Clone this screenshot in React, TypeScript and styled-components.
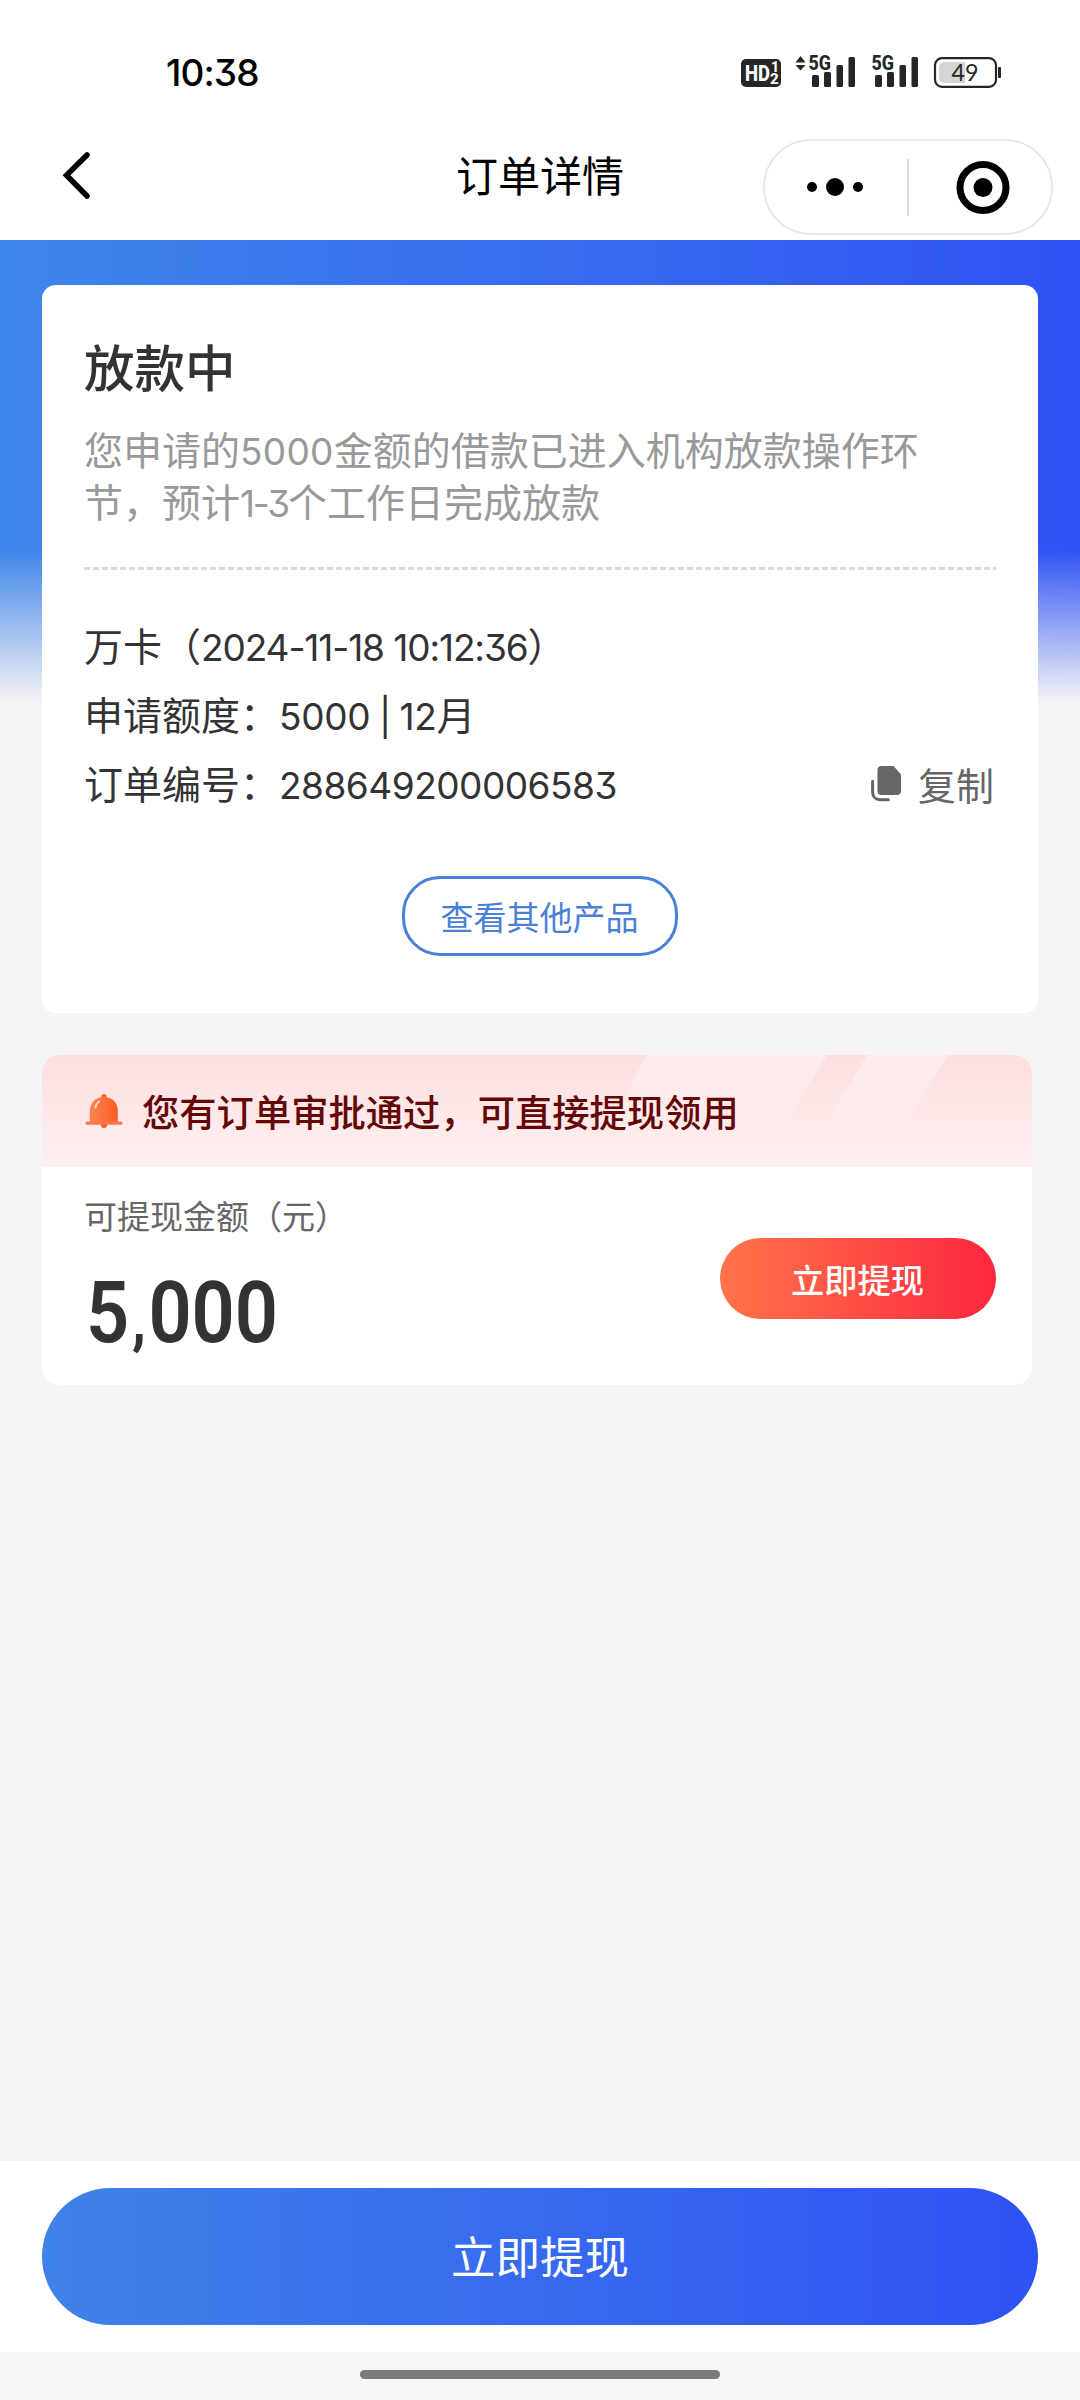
import React from "react";
import styled, { createGlobalStyle } from "styled-components";

const cjk = `"Noto Sans CJK SC", "Noto Sans", sans-serif`;

const GlobalStyle = createGlobalStyle`
  *, *::before, *::after { box-sizing: border-box; }
  body { margin: 0; background: #f5f5f5; }
  h1, h2, p { margin: 0; font-weight: 400; }
  button { border: 0; padding: 0; font-family: inherit; background: none; cursor: pointer; }
  svg { display: block; }
`;

const Screen = styled.div`
  width: 1080px;
  height: 2400px;
  display: flex;
  flex-direction: column;
  background: #f5f5f5;
  color: #333;
  font-family: ${cjk};
`;

const StatusBar = styled.div`
  height: 130px;
  padding: 16px 77px 0 166px;
  display: flex;
  align-items: center;
  justify-content: space-between;
  background: #fff;
`;

const Clock = styled.span`
  font: 500 37px/40px Inter, sans-serif;
  font-feature-settings: "cv09";
  letter-spacing: -0.9px;
  color: #000;
`;

const NavBar = styled.header`
  height: 110px;
  padding: 0 27px 0 54px;
  display: grid;
  grid-template-columns: 1fr auto 1fr;
  background: #fff;
`;

const BackButton = styled.button`
  width: 44px;
  height: 90px;
`;

const NavTitle = styled.h1`
  font-size: 42px;
  line-height: 60px;
  padding-top: 14px;
  margin-left: -27px;
  color: #000;
`;

const Capsule = styled.div`
  justify-self: end;
  width: 290px;
  height: 96px;
  margin-top: 9px;
  border: 2px solid #e8e8e8;
  border-radius: 48px;
  display: flex;
  align-items: center;
`;

const CapsuleHalf = styled.div<{ $shift: number }>`
  flex: 0 0 142px;
  display: flex;
  justify-content: center;
  padding-left: ${(p) => Math.max(p.$shift, 0)}px;
  padding-right: ${(p) => Math.max(-p.$shift, 0)}px;
`;

const CapsuleRule = styled.div`
  width: 2px;
  height: 57px;
  background: #dedede;
`;

const Main = styled.main`
  flex: 1;
  padding: 45px 42px 0;
  display: flex;
  flex-direction: column;
  gap: 42px;
  background:
    linear-gradient(to bottom, rgba(245, 245, 245, 0) 310px, #f5f5f5 462px),
    linear-gradient(to right, #3f86ea, #2f52f4);
`;

const OrderCard = styled.section`
  height: 728px;
  padding: 50px 42px 57px;
  border-radius: 14px;
  background: #fff;
  display: flex;
  flex-direction: column;
`;

const OrderStatus = styled.h2`
  font-size: 50.5px;
  line-height: 60px;
  font-weight: 500;
`;

const StatusNote = styled.p`
  margin-top: 27px;
  font-size: 39px;
  line-height: 52px;
  color: #999;
  white-space: nowrap;
`;

const Digits = styled.span<{ $gap?: number; $word?: number }>`
  font-family: Inter, ${cjk};
  font-size: 37px;
  line-height: 1;
  font-weight: 400;
  font-feature-settings: "cv09";
  letter-spacing: ${(p) => p.$gap ?? 0}px;
  word-spacing: ${(p) => p.$word ?? 0}px;
`;

const DashedRule = styled.div`
  height: 3px;
  flex: none;
  margin-top: 41px;
  background: repeating-linear-gradient(to right, #dcdcdc 0 6px, transparent 6px 9px);
`;

const OrderRows = styled.div`
  margin-top: 40px;
`;

const OrderRow = styled.div`
  height: 69px;
  display: flex;
  align-items: center;
  justify-content: space-between;
  font-size: 39px;
  line-height: 69px;
  white-space: nowrap;
`;

const CopyButton = styled.button`
  display: flex;
  align-items: center;
  gap: 17px;
  margin-right: 2px;
  padding-top: 3px;
  font-size: 38px;
  line-height: 66px;
  color: #666;
`;

const OutlineButton = styled.button`
  width: 276px;
  height: 80px;
  margin-top: auto;
  align-self: center;
  border: 3px solid #4a80d6;
  border-radius: 38px;
  font-size: 33px;
  line-height: 72px;
  text-indent: -1px;
  color: #4a80d6;
`;

const OfferCard = styled.section`
  width: 990px;
  height: 330px;
  border-radius: 18px;
  overflow: hidden;
  background: #fff;
`;

const OfferHeader = styled.div`
  position: relative;
  height: 112px;
  padding-left: 43px;
  display: flex;
  align-items: center;
  gap: 19px;
  background: linear-gradient(to bottom, #fddfe0, #feecec 75%, #feefef);
`;

const HeaderPattern = styled.svg`
  position: absolute;
  inset: 0;
`;

const BellDrawing = styled.svg`
  position: relative;
`;

const OfferTitle = styled.h2`
  position: relative;
  font-size: 37.3px;
  line-height: 60px;
  font-weight: 500;
  color: #650707;
`;

const OfferBody = styled.div`
  height: 218px;
  padding: 0 36px 0 42px;
  display: flex;
  justify-content: space-between;
`;

const AmountLabel = styled.p`
  margin-top: 28px;
  font-size: 33px;
  line-height: 40px;
  color: #666;
`;

const Amount = styled.p`
  margin: 28px 0 0 2px;
  font: 600 86px/100px Roboto, sans-serif;
  color: #333;
  transform: scaleX(0.88);
  transform-origin: left;
`;

const Comma = styled.span`
  font-size: 64px;
  line-height: 1;
  margin: 0 3px;
  font-weight: 700;
`;

const WithdrawButton = styled.button`
  width: 276px;
  height: 81px;
  margin-top: 71px;
  padding-right: 1px;
  border-radius: 41px;
  font-size: 33.3px;
  line-height: 77px;
  font-weight: 500;
  color: #fff;
  background: linear-gradient(to right, #ff744a, #fd273f);
`;

const ActionBar = styled.footer`
  height: 191px;
  padding: 27px 42px;
  background: #fff;
`;

const PrimaryButton = styled.button`
  width: 100%;
  height: 137px;
  padding-bottom: 4px;
  border-radius: 69px;
  font-size: 44.5px;
  line-height: 130px;
  color: #fff;
  background: linear-gradient(to right, #3f82e8, #2f52f4);
`;

const HomeArea = styled.div`
  height: 48px;
  padding-top: 18px;
  display: flex;
  justify-content: center;
  background: #f7f7f7;
`;

const HomeIndicator = styled.div`
  width: 360px;
  height: 9px;
  border-radius: 5px;
  background: #7b7b7b;
`;

const SignalBars = ({ x }: { x: number }) => (
  <g fill="#262626">
    <rect x={x} y="21" width="7" height="12" rx="1.5" />
    <rect x={x + 12} y="18" width="7" height="15" rx="1.5" />
    <rect x={x + 24.5} y="11" width="6.5" height="22" rx="1.5" />
    <rect x={x + 36.5} y="3" width="6.5" height="30" rx="1.5" />
  </g>
);

const StatusGlyphs = () => (
  <svg width="262" height="54" viewBox="0 -8 262 54">
    <rect x="0" y="5" width="40" height="28" rx="5" fill="#262626" />
    <g fill="#fff" fontFamily="Roboto, sans-serif" fontWeight="800">
      <text x="4" y="27" fontSize="22.5" textLength="25" lengthAdjust="spacingAndGlyphs">HD</text>
      <text x="30" y="18" fontSize="14">1</text>
      <text x="29" y="30" fontSize="15">2</text>
    </g>
    <path d="M54.500 8.500 59.500 2l5 6.500zM54.500 11h10l-5 5.500z" fill="#262626" />
    <g fill="#262626" fontFamily="Roboto, sans-serif" fontWeight="800" fontSize="21">
      <text x="67.500" y="16" textLength="22.500" lengthAdjust="spacingAndGlyphs">5G</text>
      <text x="130.500" y="16" textLength="22.500" lengthAdjust="spacingAndGlyphs">5G</text>
    </g>
    <SignalBars x={71} />
    <SignalBars x={134} />
    <rect x="194" y="4.200" width="61" height="28.600" rx="7" fill="none" stroke="#262626" strokeWidth="2.200" />
    <path d="M203 8h21v21h-21a5 5 0 0 1-5-5V13a5 5 0 0 1 5-5z" fill="#d5d5d5" />
    <rect x="257" y="13" width="3" height="11" rx="1" fill="#262626" />
    <text x="210.500" y="27" fontFamily="Lato, sans-serif" fontSize="23" fill="#262626" textLength="27" lengthAdjust="spacingAndGlyphs">49</text>
  </svg>
);

const BackIcon = () => (
  <svg width="44" height="90" viewBox="0 0 44 90" fill="none" stroke="#000" strokeWidth="5.500" strokeLinecap="round" strokeLinejoin="miter">
    <path d="M33 25 12.500 45.300 33 66" />
  </svg>
);

const MoreIcon = () => (
  <svg width="58" height="20" viewBox="0 0 58 20">
    <circle cx="6" cy="10" r="5" />
    <circle cx="29" cy="10" r="9" />
    <circle cx="52" cy="10" r="5" />
  </svg>
);

const CloseIcon = () => (
  <svg width="54" height="54" viewBox="0 0 54 54">
    <circle cx="27" cy="27.500" r="23" fill="none" stroke="#000" strokeWidth="7" />
    <circle cx="27" cy="27.500" r="9.500" />
  </svg>
);

const CopyIcon = () => (
  <svg width="30" height="36" viewBox="0 0 30 36">
    <path d="M10 0h12.500L30 8.500V25a4 4 0 0 1-4 4H10.500a4 4 0 0 1-4-4V4A4 4 0 0 1 10 0z" fill="#666" />
    <path d="M1.600 15.200v10.500c0 5 3 8 7.500 8h8.300" fill="none" stroke="#666" strokeWidth="3" strokeLinecap="round" />
  </svg>
);

const BellIcon = () => (
  <BellDrawing width="38" height="36" viewBox="0 0 38 36">
    <defs>
      <linearGradient id="bell" x1="0" y1="0" x2="1" y2="0">
        <stop offset="0" stopColor="#ff8550" />
        <stop offset="1" stopColor="#fc5a22" />
      </linearGradient>
    </defs>
    <circle cx="19" cy="3.500" r="2.600" fill="#fb6a35" />
    <circle cx="19" cy="32" r="3" fill="#fb5c20" />
    <path d="M4.800 29V18C4.800 9.500 11 4 19 4S32.800 9.500 32.800 18V29z" fill="url(#bell)" />
    <rect x="0.500" y="28.500" width="37" height="3.300" rx="1.600" fill="#fb7848" />
    <path d="M10.500 14.500c.5-2.800 1.600-4.600 3.500-6" stroke="#ffd9c8" strokeWidth="2" fill="none" strokeLinecap="round" />
  </BellDrawing>
);

export default function App() {
  return (
    <>
      <GlobalStyle />
      <Screen>
        <StatusBar>
          <Clock>10:38</Clock>
          <StatusGlyphs />
        </StatusBar>
        <NavBar>
          <BackButton aria-label="返回">
            <BackIcon />
          </BackButton>
          <NavTitle>订单详情</NavTitle>
          <Capsule>
            <CapsuleHalf $shift={-2}>
              <MoreIcon />
            </CapsuleHalf>
            <CapsuleRule />
            <CapsuleHalf $shift={5}>
              <CloseIcon />
            </CapsuleHalf>
          </Capsule>
        </NavBar>
        <Main>
          <OrderCard>
            <OrderStatus>放款中</OrderStatus>
            <StatusNote>
              您申请的<Digits $gap={0.3}>5000</Digits>金额的借款已进入机构放款操作环
              <br />
              节，预计<Digits $gap={-2.2}>1-3</Digits>个工作日完成放款
            </StatusNote>
            <DashedRule />
            <OrderRows>
              <OrderRow>
                <span>
                  万卡（<Digits $gap={-1.1}>2024-11-18 10:12:36</Digits>）
                </span>
              </OrderRow>
              <OrderRow>
                <span>
                  申请额度：<Digits $gap={-0.3} $word={-1.5}>5000 | 12</Digits>月
                </span>
              </OrderRow>
              <OrderRow>
                <span>
                  订单编号：<Digits $gap={-0.5}>288649200006583</Digits>
                </span>
                <CopyButton>
                  <CopyIcon />
                  复制
                </CopyButton>
              </OrderRow>
            </OrderRows>
            <OutlineButton>查看其他产品</OutlineButton>
          </OrderCard>
          <OfferCard>
            <OfferHeader>
              <HeaderPattern width="990" height="112" viewBox="0 0 990 112">
                <defs>
                  <linearGradient id="sheen" x1="0" y1="0" x2="0" y2="1">
                    <stop offset="0" stopColor="#feebeb" />
                    <stop offset="0.5" stopColor="#feecec" stopOpacity="0.7" />
                    <stop offset="0.8" stopColor="#feecec" stopOpacity="0" />
                  </linearGradient>
                </defs>
                <path d="M606 0H785L717 112H575C570 75 585 30 606 0z" fill="url(#sheen)" />
                <path d="M825 0H906L838 112H757z" fill="url(#sheen)" />
              </HeaderPattern>
              <BellIcon />
              <OfferTitle>您有订单审批通过，可直接提现领用</OfferTitle>
            </OfferHeader>
            <OfferBody>
              <div>
                <AmountLabel>可提现金额（元）</AmountLabel>
                <Amount>
                  5<Comma>,</Comma>000
                </Amount>
              </div>
              <WithdrawButton>立即提现</WithdrawButton>
            </OfferBody>
          </OfferCard>
        </Main>
        <ActionBar>
          <PrimaryButton>立即提现</PrimaryButton>
        </ActionBar>
        <HomeArea>
          <HomeIndicator />
        </HomeArea>
      </Screen>
    </>
  );
}
